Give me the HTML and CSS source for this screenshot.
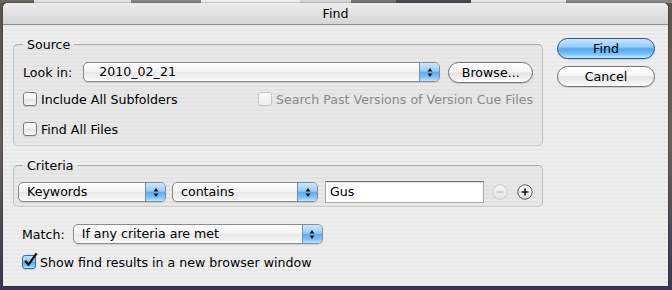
FILE: index.html
```html
<!DOCTYPE html>
<html>
<head>
<meta charset="utf-8">
<title>Find</title>
<link rel="stylesheet" href="styles.css">
</head>
<body>
<div class="window">
  <div class="titlebar">Find</div>
  <div class="content">
    <div class="main">
      <fieldset class="group source">
        <legend>Source</legend>
        <div class="group-body source-body">
          <div class="row lookin-row">
            <span class="label lookin-label">Look in:</span>
            <div class="popup popup-lookin">
              <span class="popup-text">2010_02_21</span>
              <span class="stepper"><svg width="6" height="11" viewBox="0 0 6 11"><path d="M0.5 4.5 L3 1 L5.5 4.5 Z M0.5 6.5 L3 10 L5.5 6.5 Z" fill="#151515"/></svg></span>
            </div>
            <button class="btn browse">Browse...</button>
          </div>
          <div class="row check-row first-checks">
            <label class="check"><span class="box"></span>Include All Subfolders</label>
            <label class="check disabled"><span class="box"></span>Search Past Versions of Version Cue Files</label>
          </div>
          <div class="row check-row second-checks">
            <label class="check"><span class="box"></span>Find All Files</label>
          </div>
        </div>
      </fieldset>

      <fieldset class="group criteria">
        <legend>Criteria</legend>
        <div class="group-body criteria-body">
          <div class="row criteria-row">
            <div class="popup popup-keywords">
              <span class="popup-text">Keywords</span>
              <span class="stepper"><svg width="6" height="11" viewBox="0 0 6 11"><path d="M0.5 4.5 L3 1 L5.5 4.5 Z M0.5 6.5 L3 10 L5.5 6.5 Z" fill="#151515"/></svg></span>
            </div>
            <div class="popup popup-contains">
              <span class="popup-text">contains</span>
              <span class="stepper"><svg width="6" height="11" viewBox="0 0 6 11"><path d="M0.5 4.5 L3 1 L5.5 4.5 Z M0.5 6.5 L3 10 L5.5 6.5 Z" fill="#151515"/></svg></span>
            </div>
            <div class="field">Gus</div>
            <span class="round-btn minus"><svg width="16" height="16" viewBox="0 0 16 16"><defs><linearGradient id="gm" x1="0" y1="0" x2="0" y2="1"><stop offset="0" stop-color="#f6f6f6"/><stop offset="1" stop-color="#e6e6e6"/></linearGradient></defs><circle cx="8" cy="8" r="7.2" fill="url(#gm)" stroke="#c9c9c9" stroke-width="1"/><path d="M4.6 8 H11.4" stroke="#c4c4c4" stroke-width="1.6"/></svg></span>
            <span class="round-btn plus"><svg width="16" height="16" viewBox="0 0 16 16"><defs><linearGradient id="gp" x1="0" y1="0" x2="0" y2="1"><stop offset="0" stop-color="#ffffff"/><stop offset="1" stop-color="#dcdcdc"/></linearGradient></defs><circle cx="8" cy="8" r="7.2" fill="url(#gp)" stroke="#5a5a5a" stroke-width="1"/><path d="M4.5 8 H11.5 M8 4.5 V11.5" stroke="#1e1e1e" stroke-width="1.7"/></svg></span>
          </div>
        </div>
      </fieldset>

      <div class="row match-row">
        <span class="label match-label">Match:</span>
        <div class="popup popup-match">
          <span class="popup-text">If any criteria are met</span>
          <span class="stepper"><svg width="6" height="11" viewBox="0 0 6 11"><path d="M0.5 4.5 L3 1 L5.5 4.5 Z M0.5 6.5 L3 10 L5.5 6.5 Z" fill="#151515"/></svg></span>
        </div>
      </div>

      <div class="row check-row show-row">
        <label class="check checked"><span class="box"><svg class="tick" width="17" height="17" viewBox="0 0 17 17"><path d="M3.2 8.6 L6.4 12.8 L14.6 1.4" fill="none" stroke="#111" stroke-width="2.3" stroke-linejoin="round"/></svg></span>Show find results in a new browser window</label>
      </div>
    </div>

    <div class="side">
      <button class="btn default">Find</button>
      <button class="btn">Cancel</button>
    </div>
  </div>
</div>
</body>
</html>
```

FILE: styles.css
```css
* { box-sizing: border-box; }

html, body {
  margin: 0;
  padding: 0;
}

body {
  width: 672px;
  height: 290px;
  overflow: hidden;
  padding: 3px 4px 4px 3px;
  background:
    linear-gradient(to right, #6a6660 0 34px, #e6e4e0 34px 131px, #8a8580 131px 201px, #eeeeee 201px 300px, #d8d8d8 300px 351px, #7c7874 351px 396px, #4a4a55 396px 471px, #e8e8e8 471px 566px, #8a8886 566px) top left / 100% 3px no-repeat,
    linear-gradient(to bottom, #5a544e, #67615c 50%, #4a4452 85%, #3c3450);
  font-family: "DejaVu Sans", "Noto Sans", sans-serif;
  font-size: 12.6px;
  color: #000;
}

.window {
  width: 665px;
  height: 283px;
  border-radius: 5px 5px 0 0;
  overflow: hidden;
  background: repeating-linear-gradient(to bottom, #efefef 0 2px, #e8e8e8 2px 4px);
  box-shadow: 0 0 2px rgba(0, 0, 0, 0.6);
  display: flex;
  flex-direction: column;
}

.titlebar {
  flex: none;
  height: 22px;
  line-height: 21px;
  text-align: center;
  background: linear-gradient(to bottom, #ececec, #d6d6d6);
  border-bottom: 1px solid #8e8e8e;
}

.content {
  display: flex;
  gap: 14px;
  padding: 12px 0 0 10px;
}

.main {
  width: 530px;
  flex: none;
}

.side {
  width: 98px;
  flex: none;
  padding-top: 1px;
  display: flex;
  flex-direction: column;
  gap: 7px;
}

/* group boxes */
.group {
  margin: 0;
  padding: 0;
  min-width: 0;
  border: 1px solid #bdbdbd;
  border-top-color: #a9a9a9;
  border-bottom-color: #cdcdcd;
  border-radius: 5px;
  background: rgba(0, 0, 0, 0.025);
}

.group legend {
  margin-left: 9px;
  padding: 0 4px;
  height: 15px;
  line-height: 15px;
}

.source-body {
  padding: 9px 8px 7px 9px;
}

.criteria {
  margin-top: 12px;
}

.criteria-body {
  padding: 8px 8px 3px 4px;
}

/* rows */
.row {
  display: flex;
  align-items: center;
}

.lookin-row {
  height: 22px;
}

.lookin-label {
  margin-right: 11px;
}

.check-row {
  height: 18px;
}

.first-checks {
  margin-top: 7px;
  justify-content: space-between;
  padding-right: 1px;
}

.second-checks {
  margin-top: 12px;
}

.criteria-row {
  height: 22px;
}

.match-row {
  height: 22px;
  margin-top: 16px;
  padding-left: 9px;
}

.match-label {
  margin-right: 8px;
}

.show-row {
  margin-top: 8px;
  padding-left: 9px;
}

/* popup buttons */
.popup {
  display: flex;
  height: 20px;
  border: 1px solid #8b8b8b;
  border-radius: 5px;
  overflow: hidden;
  background: linear-gradient(to bottom, #ffffff, #f3f3f3 48%, #e7e7e7 52%, #f4f4f4 85%, #fdfdfd);
  box-shadow: 0 1px 1px rgba(0, 0, 0, 0.12);
  flex: none;
}

.popup-text {
  flex: 1;
  padding-left: 8px;
  line-height: 18px;
  white-space: nowrap;
}

.stepper {
  width: 20px;
  flex: none;
  border-left: 1px solid #6f8fbf;
  background: linear-gradient(to bottom, #cfe6fb, #98cbf6 45%, #62aaf0 52%, #7dc2fb 80%, #bde8ff);
  display: flex;
  align-items: center;
  justify-content: center;
}

.popup-lookin { width: 357px; }
.popup-lookin .popup-text { padding-left: 15px; }
.popup-keywords { width: 148px; }
.popup-contains { width: 146px; margin-left: 6px; }
.popup-match { width: 250px; }

/* push buttons */
.btn {
  font: inherit;
  color: #000;
  height: 21px;
  padding: 0;
  line-height: 19px;
  text-align: center;
  border: 1px solid #737373;
  border-radius: 11px;
  background: linear-gradient(to bottom, #ffffff, #f5f5f5 45%, #e3e3e3 52%, #f1f1f1 80%, #ffffff);
  box-shadow: 0 1px 1px rgba(0, 0, 0, 0.15);
}

.btn.default {
  border-color: #2d5591;
  background: linear-gradient(to bottom, #cbe6fd, #93cbf8 42%, #5aa6ef 52%, #79c3fc 80%, #c0ecff);
}

.browse {
  width: 85px;
  margin-left: 8px;
}

/* checkboxes */
.check {
  display: flex;
  align-items: center;
  gap: 4px;
  height: 18px;
  white-space: nowrap;
}

.box {
  position: relative;
  width: 14px;
  height: 14px;
  flex: none;
  border: 1px solid #7a7a7a;
  border-radius: 3px;
  background: linear-gradient(to bottom, #ffffff, #f2f2f2 48%, #e2e2e2 52%, #f8f8f8);
  box-shadow: 0 1px 1px rgba(0, 0, 0, 0.12);
}

.check.disabled {
  color: #8a8a8a;
}

.check.disabled .box {
  border-color: #c6c6c6;
  background: linear-gradient(to bottom, #fafafa, #eeeeee);
  box-shadow: none;
}

.check.checked .box {
  border-color: #42679f;
  background: linear-gradient(to bottom, #c6e3fc, #8cc5f6 45%, #5aa6ef 52%, #86ccfd 85%, #bde8ff);
}

.tick {
  position: absolute;
  left: -1px;
  top: -4px;
}

/* text field */
.field {
  width: 159px;
  height: 22px;
  margin-left: 7px;
  padding-left: 4px;
  line-height: 20px;
  background: #fff;
  border: 1px solid #a9a9a9;
  border-top-color: #707070;
  box-shadow: inset 0 1px 1px rgba(0, 0, 0, 0.12);
  flex: none;
}

.round-btn {
  display: flex;
  width: 16px;
  height: 16px;
  flex: none;
}

.round-btn.minus { margin-left: 8px; }
.round-btn.plus { margin-left: 9px; }
```
